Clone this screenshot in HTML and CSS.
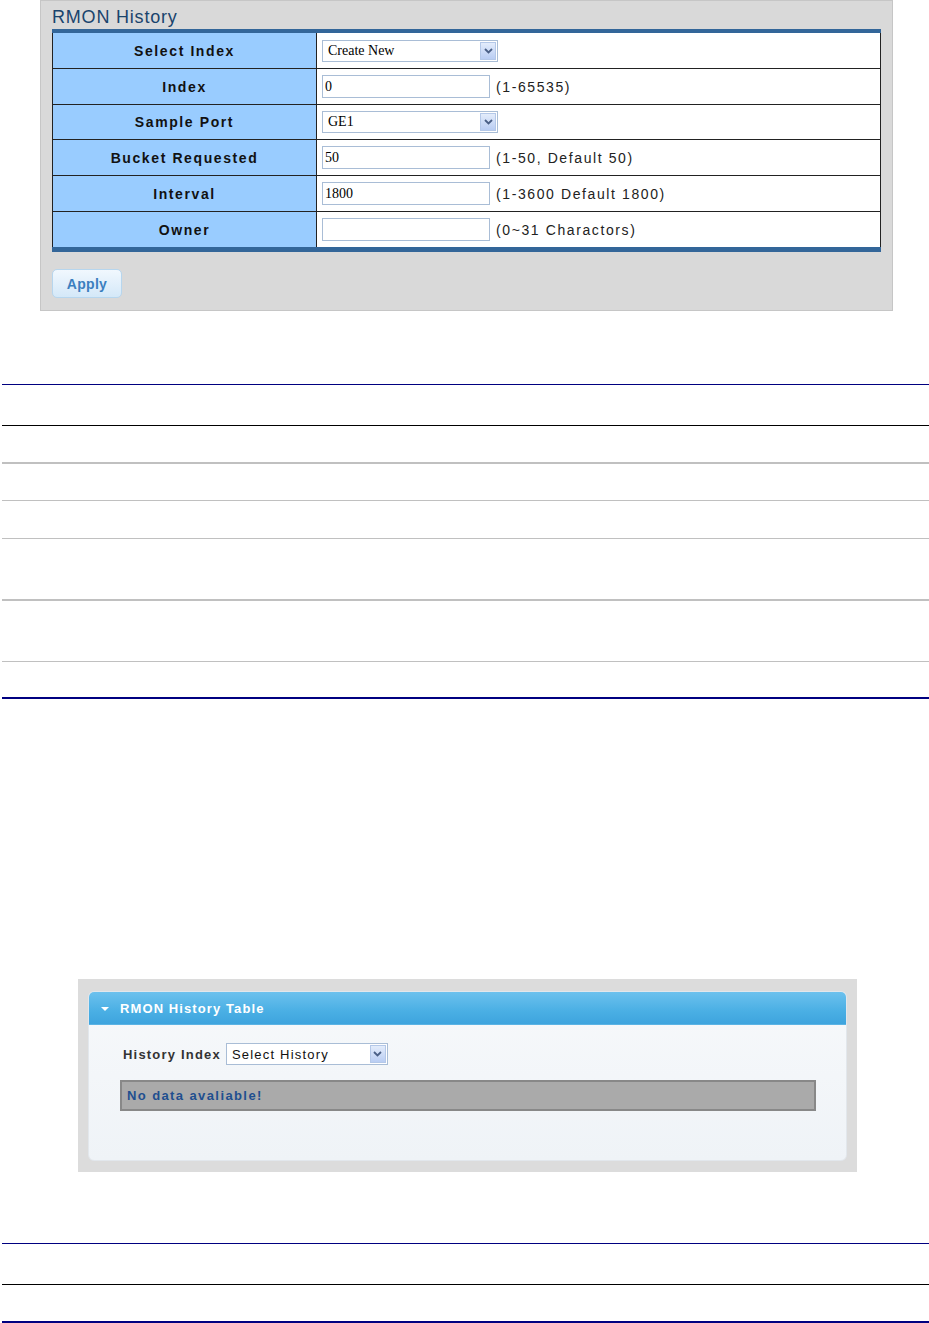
FILE: index.html
```html
<!DOCTYPE html>
<html>
<head>
<meta charset="utf-8">
<link rel="stylesheet" href="styles.css">
</head>
<body>
<div class="panel">
  <div class="panel-title">RMON History</div>
  <div class="form">
    <div class="row">
      <div class="label">Select Index</div>
      <div class="value">
        <div class="select select-wide"><span class="select-text serif">Create New</span><span class="arrow"><svg width="9" height="6" viewBox="0 0 9 6"><path d="M1 1 L4.5 4.5 L8 1" fill="none" stroke="#4a5f86" stroke-width="1.8"/></svg></span></div>
      </div>
    </div>
    <div class="row">
      <div class="label">Index</div>
      <div class="value"><input class="field" type="text" value="0"><span class="hint">(1-65535)</span></div>
    </div>
    <div class="row row-s">
      <div class="label">Sample Port</div>
      <div class="value">
        <div class="select select-wide"><span class="select-text serif">GE1</span><span class="arrow"><svg width="9" height="6" viewBox="0 0 9 6"><path d="M1 1 L4.5 4.5 L8 1" fill="none" stroke="#4a5f86" stroke-width="1.8"/></svg></span></div>
      </div>
    </div>
    <div class="row">
      <div class="label">Bucket Requested</div>
      <div class="value"><input class="field" type="text" value="50"><span class="hint">(1-50, Default 50)</span></div>
    </div>
    <div class="row">
      <div class="label">Interval</div>
      <div class="value"><input class="field" type="text" value="1800"><span class="hint">(1-3600 Default 1800)</span></div>
    </div>
    <div class="row row-last">
      <div class="label">Owner</div>
      <div class="value"><input class="field" type="text" value=""><span class="hint">(0~31 Charactors)</span></div>
    </div>
  </div>
  <button class="apply">Apply</button>
</div>

<div class="rules rules-a">
  <div class="rule r-navy h41"></div>
  <div class="rule r-black h37"></div>
  <div class="rule r-gray2 h38"></div>
  <div class="rule r-gray h38"></div>
  <div class="rule r-gray h61"></div>
  <div class="rule r-gray2 h62"></div>
  <div class="rule r-gray h36"></div>
  <div class="rule r-navy2 h2"></div>
</div>

<div class="frame">
  <div class="box">
    <div class="box-head"><span class="tri"></span><span class="box-title">RMON History Table</span></div>
    <div class="box-body">
      <div class="hist-row">
        <span class="hist-label">History Index</span>
        <div class="select select-hist"><span class="select-text sans">Select History</span><span class="arrow"><svg width="9" height="6" viewBox="0 0 9 6"><path d="M1 1 L4.5 4.5 L8 1" fill="none" stroke="#4a5f86" stroke-width="1.8"/></svg></span></div>
      </div>
      <div class="nodata">No data avaliable!</div>
    </div>
  </div>
</div>

<div class="rules rules-b">
  <div class="rule r-navy h41"></div>
  <div class="rule r-black h37"></div>
  <div class="rule r-navy2 h2"></div>
</div>
</body>
</html>
```

FILE: styles.css
```css
* { box-sizing: border-box; }
html, body { margin: 0; padding: 0; background: #ffffff; }
body {
  width: 929px;
  font-family: "Liberation Sans", Arial, sans-serif;
  color: #222;
}

.panel {
  margin-left: 40px;
  width: 853px;
  height: 311px;
  background: #d9d9d9;
  border: 1px solid #c6c6c6;
  padding-top: 6px;
}
.panel-title {
  padding-left: 11px;
  font-size: 18px;
  line-height: 20px;
  letter-spacing: 0.8px;
  color: #1a446d;
}
.form {
  margin: 2px 0 0 11px;
  width: 829px;
  border-top: 4px solid #336699;
  border-bottom: 5px solid #336699;
  background: #fff;
}
.row {
  display: grid;
  grid-template-columns: 265px 1fr;
  height: 36px;
  border-bottom: 1px solid #222;
}
.row-s { height: 35px; }
.row-last { border-bottom: none; height: 35px; }
.label {
  background: #99ccff;
  border-left: 1px solid #222;
  border-right: 1px solid #222;
  display: flex;
  align-items: center;
  justify-content: center;
  font-weight: bold;
  font-size: 14px;
  letter-spacing: 1.6px;
  color: #111;
}
.value {
  border-right: 1px solid #222;
  display: flex;
  align-items: center;
  padding-left: 5px;
  gap: 6px;
}
.field {
  width: 168px;
  height: 23px;
  border: 1px solid #a9bdd6;
  padding: 1px 2px;
  margin: 0;
  font-family: "Liberation Serif", "Times New Roman", serif;
  font-size: 14px;
  color: #000;
  background: #fff;
  outline: none;
}
.hint {
  font-size: 14px;
  letter-spacing: 1.6px;
  color: #222;
}
.select {
  display: flex;
  align-items: center;
  justify-content: space-between;
  height: 22px;
  border: 1px solid #a9bdd6;
  background: #fff;
  padding: 1px 1px 1px 5px;
}
.select-wide { width: 176px; }
.select-hist { width: 162px; }
.select-text { font-size: 14px; color: #000; }
.serif { font-family: "Liberation Serif", "Times New Roman", serif; }
.sans { font-family: "Liberation Sans", Arial, sans-serif; font-size: 13px; letter-spacing: 1.2px; color: #111; }
.arrow {
  width: 16px;
  height: 18px;
  border: 1px solid #b4c8e8;
  background: linear-gradient(#e3ecfb, #b9cdf3);
  display: flex;
  align-items: center;
  justify-content: center;
}
.arrow svg { display: block; }

.apply {
  display: block;
  margin: 17px 0 0 11px;
  width: 70px;
  height: 29px;
  border: 1px solid #b7d6ee;
  border-radius: 5px;
  background: linear-gradient(#f1f8fe, #d4e8f8);
  font-family: "Liberation Sans", Arial, sans-serif;
  font-weight: bold;
  font-size: 14px;
  letter-spacing: 0.3px;
  color: #3b7fbf;
  padding: 0;
}

.rules { margin-left: 2px; width: 927px; }
.rules-a { margin-top: 73px; }
.rules-b { margin-top: 71px; }
.rule { width: 100%; }
.r-navy { border-top: 1px solid #000080; }
.r-navy2 { border-top: 2px solid #000080; }
.r-black { border-top: 1px solid #000; }
.r-gray { border-top: 1px solid #c0c0c0; }
.r-gray2 { border-top: 2px solid #c0c0c0; }
.h2 { height: 2px; }
.h36 { height: 36px; }
.h37 { height: 37px; }
.h38 { height: 38px; }
.h41 { height: 41px; }
.h61 { height: 61px; }
.h62 { height: 62px; }

.frame {
  margin: 280px 0 0 78px;
  width: 779px;
  height: 193px;
  background: #dcdcdc;
  padding: 12px 10px 11px 10px;
}
.box {
  height: 170px;
  border: 1px solid #e2e7ec;
  border-radius: 6px;
  background: linear-gradient(#f7f9fb, #eff3f7);
  overflow: hidden;
}
.box-head {
  height: 33px;
  background: linear-gradient(#6cc1ee, #4aafe4 60%, #3ea4de);
  border-bottom: 1px solid #5bb3e4;
  display: flex;
  align-items: center;
  padding-left: 12px;
  padding-top: 1px;
}
.tri {
  width: 0;
  height: 0;
  border-left: 4px solid transparent;
  border-right: 4px solid transparent;
  border-top: 4px solid #fff;
  margin-right: 11px;
}
.box-title {
  color: #fff;
  font-weight: bold;
  font-size: 13px;
  letter-spacing: 1.1px;
}
.box-body { padding: 18px 0 0 0; }
.hist-row {
  display: flex;
  align-items: center;
  gap: 5px;
  padding-left: 34px;
}
.hist-label {
  font-weight: bold;
  font-size: 13px;
  letter-spacing: 1.2px;
  color: #333;
}
.nodata {
  margin: 15px 0 0 31px;
  width: 696px;
  height: 31px;
  background: #aaaaaa;
  border: 2px solid #888;
  display: flex;
  align-items: center;
  padding-left: 5px;
  font-weight: bold;
  font-size: 13px;
  letter-spacing: 1.4px;
  color: #1f4f8f;
}
```
